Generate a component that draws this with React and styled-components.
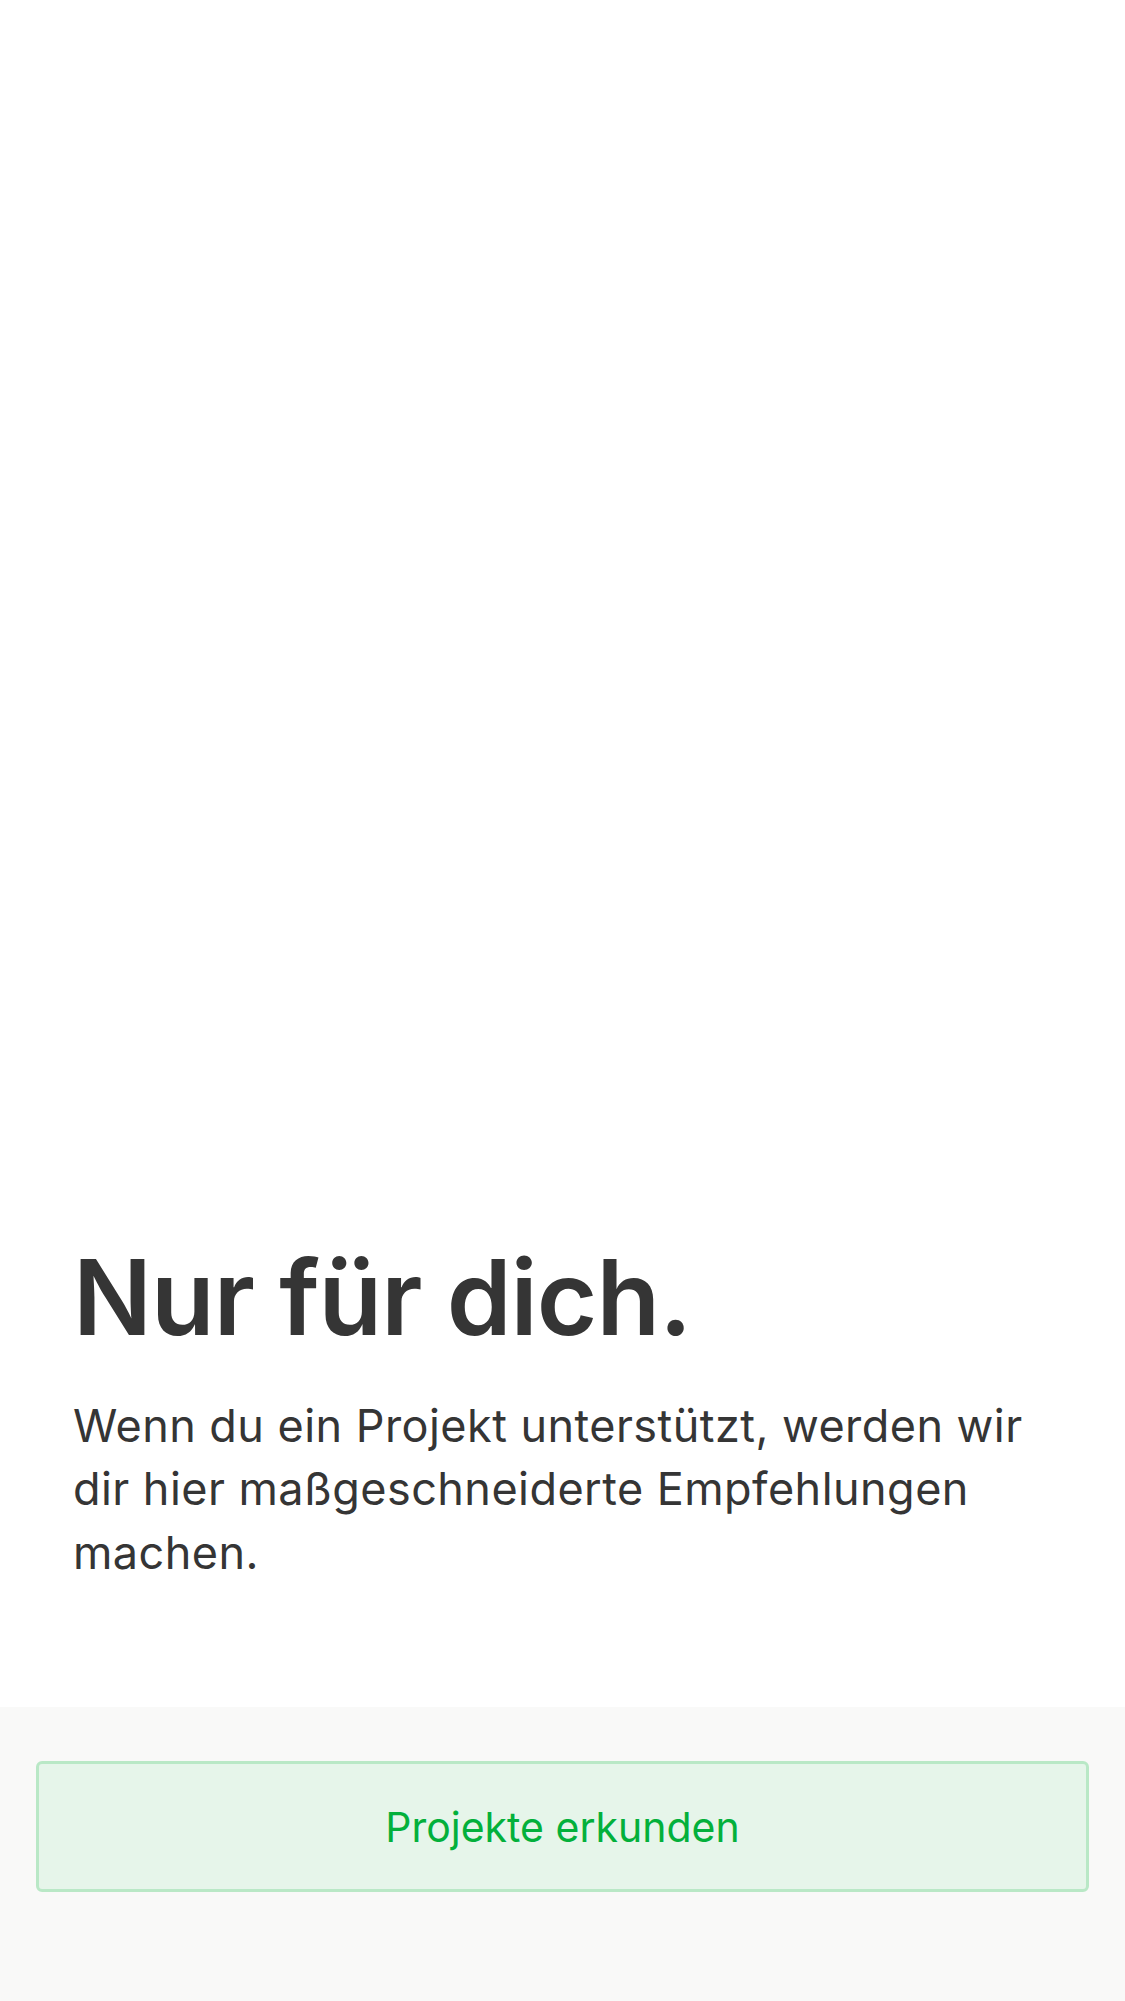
import React from "react";
import styled, { createGlobalStyle } from "styled-components";

const GlobalStyle = createGlobalStyle`
  html, body {
    margin: 0;
    padding: 0;
    background: #ffffff;
    font-family: Inter, "Noto Sans", "Liberation Sans", sans-serif;
  }
`;

const Screen = styled.div`
  display: flex;
  flex-direction: column;
  height: 2001px;
`;

const Intro = styled.section`
  flex: 1;
  display: flex;
  flex-direction: column;
  justify-content: flex-end;
  padding: 0 60px 123px 73px;
  color: #353535;
`;

const Title = styled.h1`
  margin: 0 0 34px;
  font-size: 104px;
  font-weight: 600;
  line-height: 1.2;
  letter-spacing: -1px;
`;

const Description = styled.p`
  margin: 0;
  font-size: 45px;
  font-weight: 400;
  line-height: 63.5px;
  letter-spacing: 0.45px;
`;

const Footer = styled.footer`
  height: 294px;
  box-sizing: border-box;
  padding: 54px 36px;
  background: #f9f9f8;
`;

const ExploreButton = styled.button`
  display: flex;
  align-items: center;
  justify-content: center;
  width: 100%;
  height: 131px;
  border: 3px solid #b9e8c6;
  border-radius: 6px;
  background: #e6f5ea;
  color: #03b03b;
  font-family: Inter, "Noto Sans", "Liberation Sans", sans-serif;
  font-size: 41px;
  font-weight: 400;
  cursor: pointer;
`;

const App = () => {
  return (
    <Screen>
      <GlobalStyle />
      <Intro>
        <Title>Nur für dich.</Title>
        <Description>
          Wenn du ein Projekt unterstützt, werden wir dir hier
          maßgeschneiderte Empfehlungen machen.
        </Description>
      </Intro>
      <Footer>
        <ExploreButton>Projekte erkunden</ExploreButton>
      </Footer>
    </Screen>
  );
};

export default App;
